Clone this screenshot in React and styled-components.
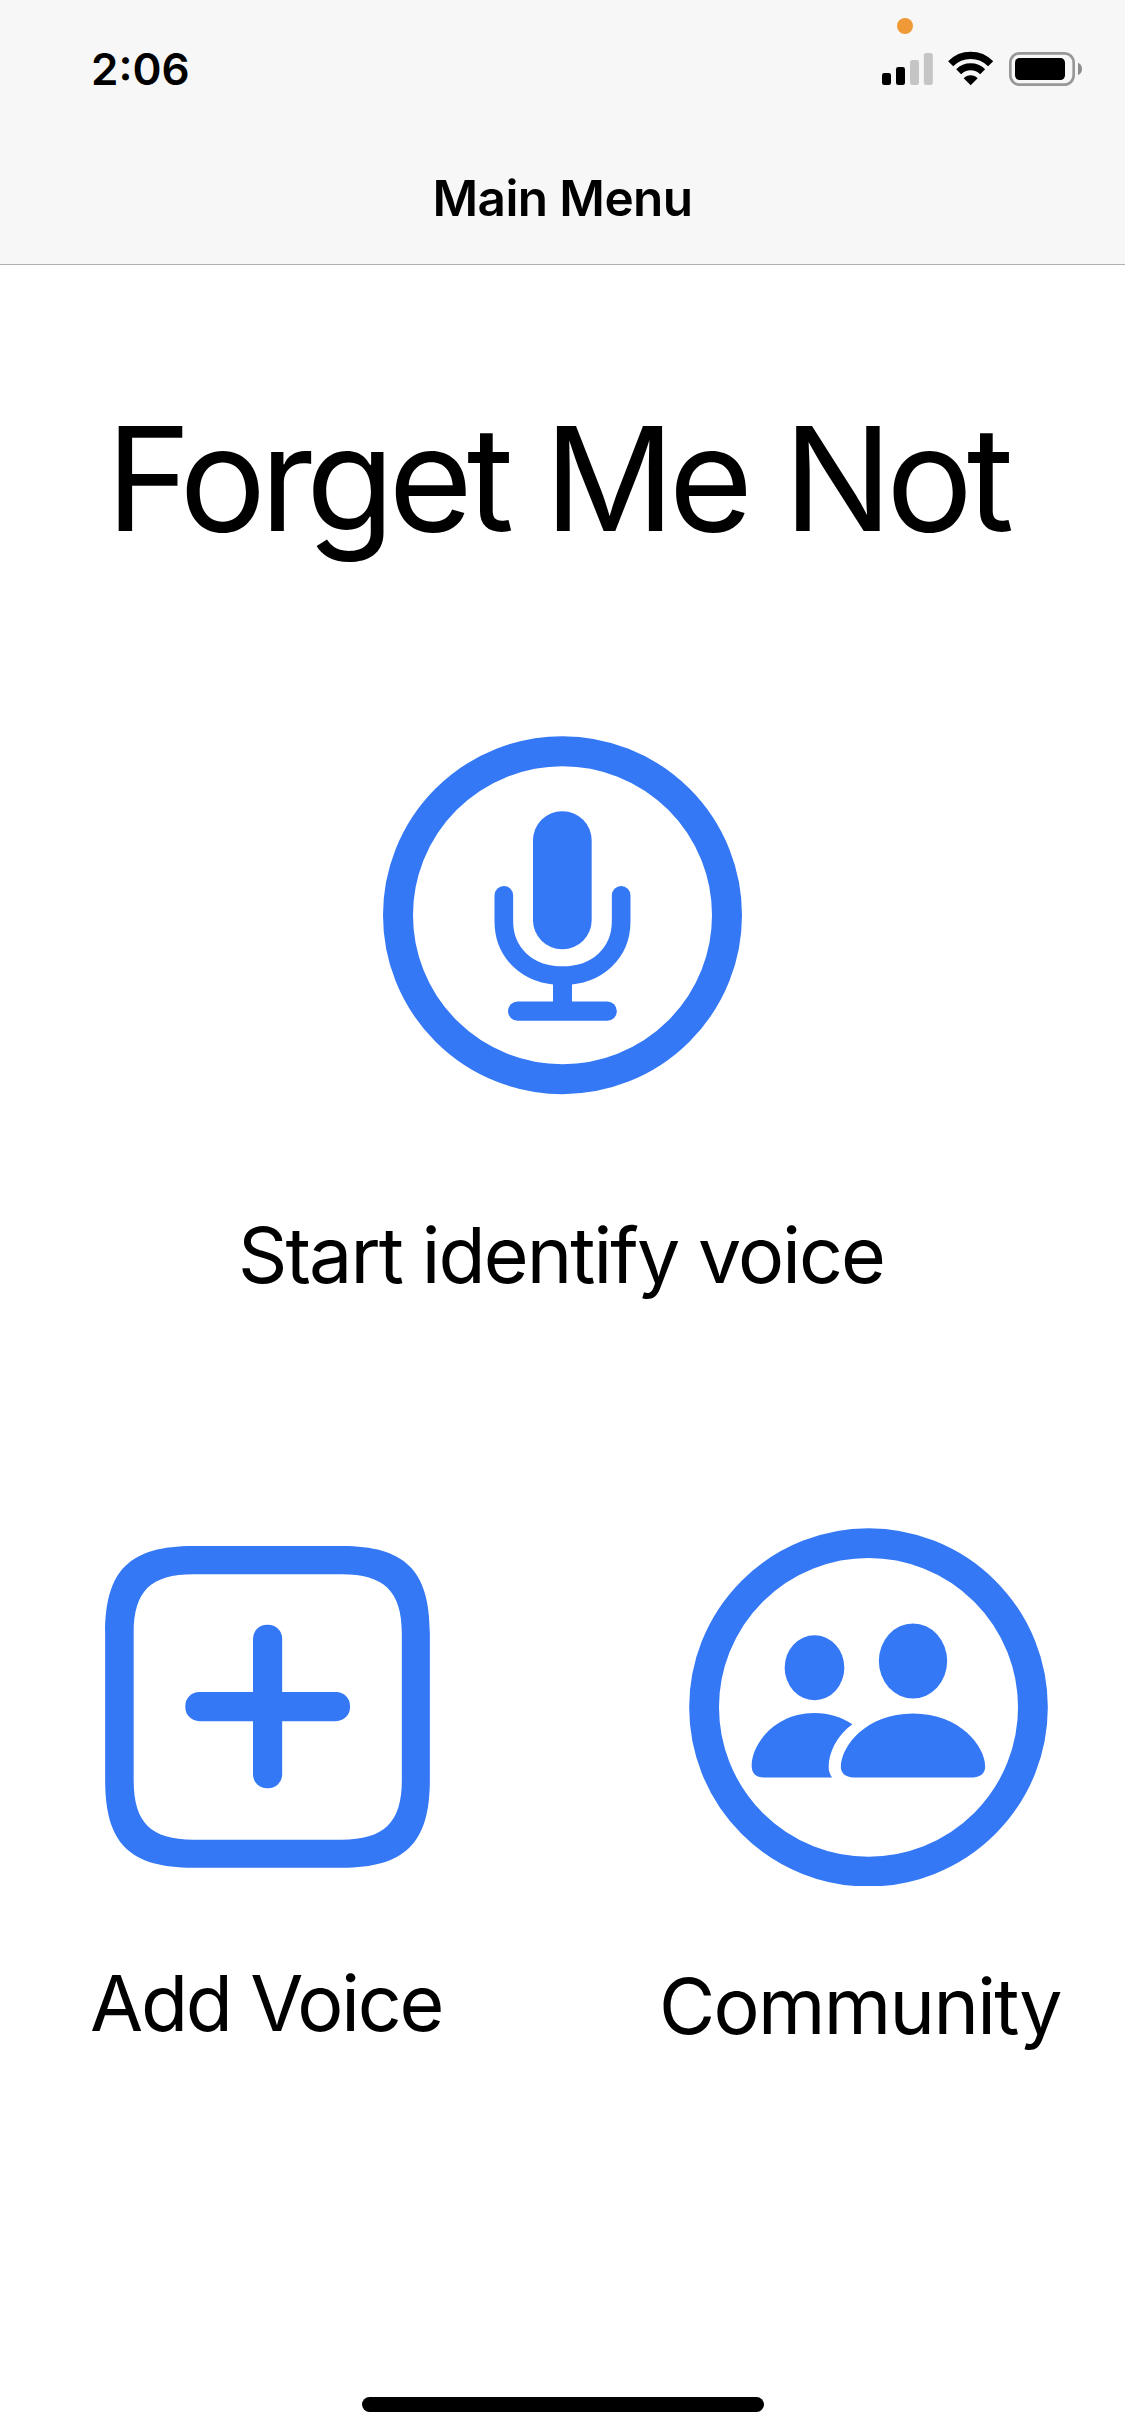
import React from "react";
import styled, { createGlobalStyle } from "styled-components";

const BLUE = "#3478f6";

const GlobalStyle = createGlobalStyle`
  body {
    margin: 0;
    background: #fff;
  }
`;

const Screen = styled.div`
  display: flex;
  flex-direction: column;
  width: 1125px;
  height: 2436px;
  overflow: hidden;
  background: #fff;
  color: #000;
  font-family: "Inter", "Liberation Sans", sans-serif;
`;

const Header = styled.header`
  flex: none;
  background: #f7f7f7;
  border-bottom: 1px solid #b0b0b0;
`;

const StatusBar = styled.div`
  position: relative;
  display: flex;
  align-items: center;
  justify-content: space-between;
  height: 132px;
  padding: 6px 43px 0 91px;
  box-sizing: border-box;
`;

const Time = styled.time`
  font-size: 44px;
  font-weight: 570;
  line-height: 54px;
`;

const StatusIcons = styled.div`
  display: flex;
  align-items: center;
  gap: 15.5px;

  svg {
    display: block;
  }
`;

const RecordingDot = styled.span`
  position: absolute;
  top: 18px;
  left: 897px;
  width: 16px;
  height: 16px;
  border-radius: 50%;
  background: #f09a37;
`;

const NavBar = styled.div`
  display: flex;
  align-items: center;
  justify-content: center;
  height: 132px;
`;

const NavTitle = styled.h2`
  margin: 0;
  font-size: 49.5px;
  font-weight: 560;
  line-height: 60px;
  letter-spacing: -0.6px;
`;

const Content = styled.main`
  flex: 1;
  display: flex;
  flex-direction: column;
  align-items: center;
  padding-top: 124px;
`;

const Title = styled.h1`
  margin: 0;
  padding-right: 11px;
  font-size: 144.5px;
  font-weight: 400;
  line-height: 180px;
  letter-spacing: -6.1px;
  word-spacing: 2px;
  white-space: nowrap;
`;

const Action = styled.button`
  display: flex;
  flex-direction: column;
  align-items: ${(p) => (p.$align === "start" ? "flex-start" : "center")};
  margin: 0;
  padding: 0;
  border: 0;
  background: none;
  color: inherit;
  font: inherit;
`;

const PrimaryAction = styled(Action)`
  margin-top: 167px;
`;

const IconSlot = styled.span`
  display: flex;
  align-items: center;
  height: 359px;
  margin-left: ${(p) => p.$inset || 0}px;

  svg {
    display: block;
  }
`;

const Label = styled.span`
  margin-top: ${(p) => p.$gap}px;
  padding-right: ${(p) => p.$trail || 0}px;
  font-size: 77px;
  line-height: 96px;
  letter-spacing: ${(p) => p.$tracking}px;
  white-space: nowrap;
`;

const SecondaryActions = styled.div`
  display: flex;
  justify-content: space-between;
  align-self: stretch;
  margin-top: 225px;
  padding: 0 64px 0 90px;
`;

const HomeArea = styled.footer`
  flex: none;
  display: flex;
  justify-content: center;
  padding-bottom: 24px;
`;

const HomeIndicator = styled.div`
  width: 402px;
  height: 15px;
  border-radius: 7.5px;
  background: #000;
`;

function SignalIcon() {
  return (
    <svg width="50.67" height="34" viewBox="66 156 152 102">
      <rect x="66" y="219" width="27" height="36" rx="7" />
      <rect x="108" y="201" width="27" height="54" rx="7" />
      <rect x="150" y="180" width="27" height="75" rx="7" fill="#c5c5c5" />
      <rect x="191.5" y="159" width="27" height="96" rx="7" fill="#c5c5c5" />
    </svg>
  );
}

function WifiIcon() {
  return (
    <svg width="45.33" height="34" viewBox="265 156 136 102" overflow="visible">
      <g fill="none" stroke="#000">
        <path d="M273 191.5A84 84 0 0 1 393 191.5" strokeWidth="21.5" />
        <path d="M297 215A51 51 0 0 1 369 215" strokeWidth="21" />
      </g>
      <path d="M333 255.500L312 235A28 28 0 0 1 354 235Z" />
    </svg>
  );
}

function BatteryIcon() {
  return (
    <svg width="73" height="34" viewBox="447 156 219 102">
      <rect x="451" y="160" width="190" height="94" rx="28" fill="none" stroke="#989898" strokeWidth="8" />
      <rect x="465" y="174" width="150" height="66" rx="14" />
      <path d="M654 188.500C662 192 666 199 666 207C666 215 662 222 654 225.500Z" fill="#8c8c8c" />
    </svg>
  );
}

function MicIcon() {
  return (
    <svg width="359" height="358.33" viewBox="39 47 1077 1075" fill={BLUE}>
      <ellipse cx="577.5" cy="584.5" rx="493.5" ry="492" fill="none" stroke={BLUE} strokeWidth="90" />
      <rect x="489" y="273" width="176" height="413.500" rx="87" />
      <path
        d="M401.500 525V603C401.500 697 472 766 577.500 766C683 766 753.500 697 753.500 603V525"
        fill="none"
        stroke={BLUE}
        strokeWidth="56"
        strokeLinecap="round"
      />
      <rect x="549" y="780" width="57" height="80" />
      <rect x="414" y="843.500" width="326.500" height="58" rx="29" />
    </svg>
  );
}

function AddIcon() {
  return (
    <svg width="325" height="322" viewBox="75 78 975 966" fill={BLUE}>
      <path
        fillRule="evenodd"
        d="M340 78H785C974 78 1049.500 150 1049.500 340V781C1049.500 971 974 1043.500 785 1043.500H340C150 1043.500 75.500 971 75.500 781V340C75.500 150 150 78 340 78Z
           M340 162.500C213 162.500 161 212 161 340V781C161 909 213 959 340 959H785C911 959 965.500 909 965.500 781V340C965.500 212 911 162.500 785 162.500Z"
      />
      <rect x="519" y="314" width="87.500" height="491" rx="42" />
      <rect x="316" y="516" width="494" height="87.500" rx="42" />
    </svg>
  );
}

function CommunityIcon() {
  return (
    <svg width="359" height="358.67" viewBox="60 52 1077 1076" fill={BLUE}>
      <ellipse cx="598.500" cy="590" rx="493.250" ry="492.750" fill="none" stroke={BLUE} strokeWidth="89.500" />
      <ellipse cx="436.500" cy="471" rx="89.500" ry="97.500" />
      <ellipse cx="732" cy="451" rx="102.500" ry="112.500" />
      <path d="M248 765C248 700 318 607 436 607C480 607 518 619 550 641C503 675 479 727 479 768Q479 786 489 800.500H288Q248 800.500 248 765Z" />
      <path d="M515.500 768C515.500 708 590 608.500 732 608.500C874 608.500 948.500 708 948.500 768Q948.500 800.500 902 800.500H562Q515.500 800.500 515.500 768Z" />
    </svg>
  );
}

export default function App() {
  return (
    <>
      <GlobalStyle />
      <Screen>
        <Header>
          <StatusBar>
            <Time>2:06</Time>
            <RecordingDot />
            <StatusIcons>
              <SignalIcon />
              <WifiIcon />
              <BatteryIcon />
            </StatusIcons>
          </StatusBar>
          <NavBar>
            <NavTitle>Main Menu</NavTitle>
          </NavBar>
        </Header>
        <Content>
          <Title>Forget Me Not</Title>
          <PrimaryAction>
            <IconSlot>
              <MicIcon />
            </IconSlot>
            <Label $gap={111.5} $tracking={-1.9} $trail={3}>
              Start identify voice
            </Label>
          </PrimaryAction>
          <SecondaryActions>
            <Action $align="start">
              <IconSlot $inset={15}>
                <AddIcon />
              </IconSlot>
              <Label $gap={68.5} $tracking={-2.2}>
                Add Voice
              </Label>
            </Action>
            <Action $align="start">
              <IconSlot $inset={30.5}>
                <CommunityIcon />
              </IconSlot>
              <Label $gap={71.5} $tracking={-1.65}>
                Community
              </Label>
            </Action>
          </SecondaryActions>
        </Content>
        <HomeArea>
          <HomeIndicator />
        </HomeArea>
      </Screen>
    </>
  );
}
